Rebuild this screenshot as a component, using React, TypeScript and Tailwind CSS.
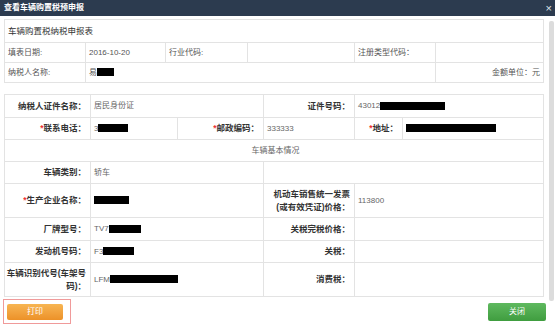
import React from "react";

const font = { fontFamily: '"Liberation Sans", "Noto Sans CJK SC", sans-serif' };

const Black = ({ w }: { w: number }) => (
  <span className="inline-block h-[8px] bg-black align-middle" style={{ width: w }} />
);

const Req = () => <span className="text-[#e33]">*</span>;

const td = "border border-[#e3e3e3] px-[3px]";
const lab = "border border-[#e3e3e3] pr-[4px] text-right font-bold text-[#333] text-[8.5px]";
const val = "border border-[#e3e3e3] pl-[3px] text-[#666] text-[8px]";

const App = () => {
  return (
    <div className="w-[555px] h-[325px] overflow-hidden bg-white" style={font}>
      <div className="h-4 bg-[#2c3b4f] flex items-center justify-between pl-[4px] pr-[3px]">
        <span className="text-white font-bold text-[8px] leading-none">查看车辆购置税预申报</span>
        <span className="text-[#dfe4ea] text-[11px] leading-none">×</span>
      </div>
      <div className="flex">
        <div className="w-[549px] pl-[4px] pr-[6px] pt-[3px]">
          <table className="w-[539px] table-fixed border-collapse text-[8px] text-[#555]">
            <colgroup>
              <col className="w-[81px]" />
              <col className="w-[80px]" />
              <col className="w-[82px]" />
              <col className="w-[107px]" />
              <col className="w-[81px]" />
              <col className="w-[108px]" />
            </colgroup>
            <tbody>
              <tr className="h-[23px]">
                <td colSpan={6} className={`${td} text-[8.5px] text-[#333]`}>车辆购置税纳税申报表</td>
              </tr>
              <tr className="h-[20px]">
                <td className={td}>填表日期:</td>
                <td className={td}>2016-10-20</td>
                <td className={td}>行业代码:</td>
                <td className={td}></td>
                <td className={td}>注册类型代码：</td>
                <td className={td}></td>
              </tr>
              <tr className="h-[20px]">
                <td className={td}>纳税人名称:</td>
                <td colSpan={4} className={td}>
                  易<Black w={17} />
                </td>
                <td className={`${td} text-right`}>金额单位：元</td>
              </tr>
            </tbody>
          </table>

          <table className="mt-[11px] w-[539px] table-fixed border-collapse">
            <colgroup>
              <col className="w-[86px]" />
              <col className="w-[87px]" />
              <col className="w-[86px]" />
              <col className="w-[91px]" />
              <col className="w-[48px]" />
              <col className="w-[141px]" />
            </colgroup>
            <tbody>
              <tr className="h-[23px]">
                <td className={lab}>纳税人证件名称：</td>
                <td colSpan={2} className={val}>居民身份证</td>
                <td className={lab}>证件号码：</td>
                <td colSpan={2} className={val}>
                  43012<Black w={65} />
                </td>
              </tr>
              <tr className="h-[22px]">
                <td className={lab}>
                  <Req />联系电话：
                </td>
                <td className={val}>
                  3<Black w={30} />
                </td>
                <td className={lab}>
                  <Req />邮政编码：
                </td>
                <td className={val}>333333</td>
                <td className={lab}>
                  <Req />地址：
                </td>
                <td className={val}>
                  <Black w={90} />
                </td>
              </tr>
              <tr className="h-[22px]">
                <td colSpan={6} className={`${val} text-center pl-0`}>车辆基本情况</td>
              </tr>
              <tr className="h-[22px]">
                <td className={lab}>车辆类别：</td>
                <td colSpan={2} className={val}>轿车</td>
                <td colSpan={3} className={val}></td>
              </tr>
              <tr className="h-[34px]">
                <td className={lab}>
                  <Req />生产企业名称：
                </td>
                <td colSpan={2} className={val}>
                  <Black w={35} />
                </td>
                <td className={`${lab} leading-[13px]`}>
                  机动车销售统一发票
                  <br />
                  (或有效凭证)价格：
                </td>
                <td colSpan={2} className={val}>113800</td>
              </tr>
              <tr className="h-[23px]">
                <td className={lab}>厂牌型号：</td>
                <td colSpan={2} className={val}>
                  TV7<Black w={32} />
                </td>
                <td className={lab}>关税完税价格：</td>
                <td colSpan={2} className={val}></td>
              </tr>
              <tr className="h-[22px]">
                <td className={lab}>发动机号码：</td>
                <td colSpan={2} className={val}>
                  F3<Black w={31} />
                </td>
                <td className={lab}>关税：</td>
                <td colSpan={2} className={val}></td>
              </tr>
              <tr className="h-[34px]">
                <td className={`${lab} leading-[13px]`}>
                  车辆识别代号(车架号
                  <br />
                  码)：
                </td>
                <td colSpan={2} className={val}>
                  LFM<Black w={68} />
                </td>
                <td className={lab}>消费税：</td>
                <td colSpan={2} className={val}></td>
              </tr>
            </tbody>
          </table>

          <div className="mt-[2px] -ml-px -mr-[3px] flex items-center justify-between">
            <div className="flex border border-[#f09a9a] pl-[3px] pr-[7px] pt-[4px] pb-[3px]">
              <button className="w-[56px] h-[16px] rounded-[2px] bg-gradient-to-b from-[#f7b552] to-[#ec9127] text-white text-[8px] leading-none">
                打印
              </button>
            </div>
            <button className="w-[58px] h-[18px] rounded-[2px] bg-gradient-to-b from-[#5fb95f] to-[#3f9d3f] text-white text-[8px] leading-none">
              关闭
            </button>
          </div>
        </div>
        <div className="w-[6px] pt-[5px]">
          <div className="h-[280px] w-[5px] bg-[#dcdcdc] rounded-[2px]" />
        </div>
      </div>
    </div>
  );
};

export default App;
